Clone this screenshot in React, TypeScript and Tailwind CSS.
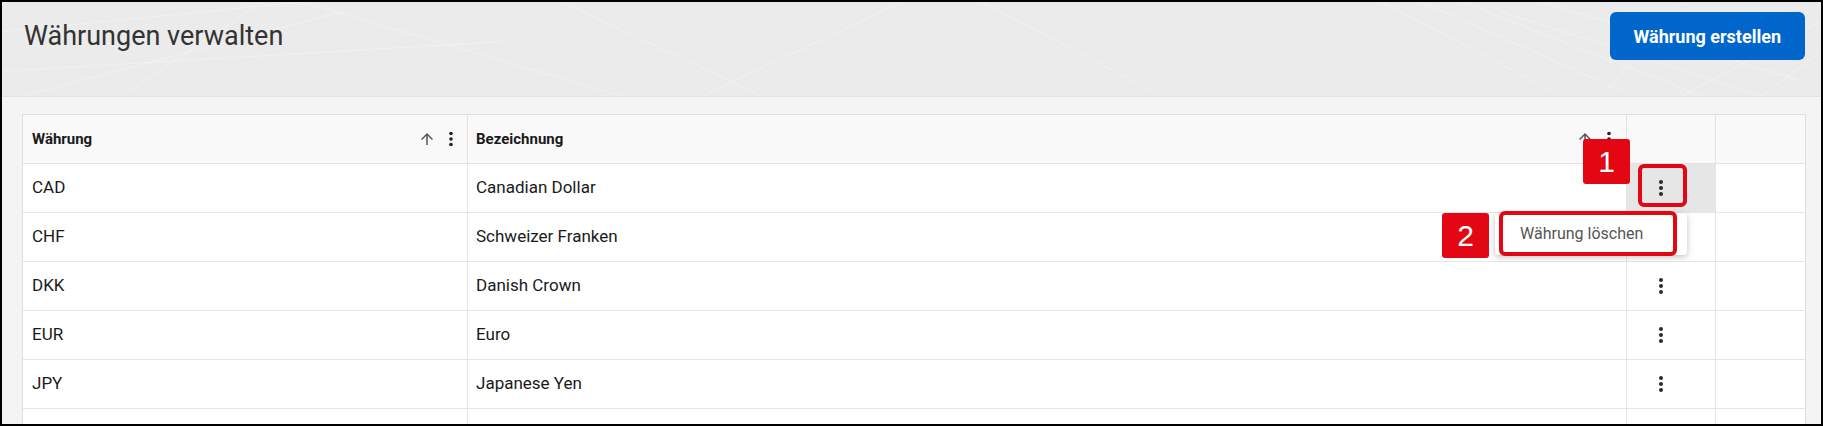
import React from "react";

const Kebab = ({ className = "" }: { className?: string }) => (
  <svg viewBox="0 0 24 24" className={className} fill="currentColor">
    <circle cx="12" cy="6" r="2" />
    <circle cx="12" cy="12" r="2" />
    <circle cx="12" cy="18" r="2" />
  </svg>
);

const ArrowUp = ({ className = "" }: { className?: string }) => (
  <svg viewBox="0 0 24 24" className={className} fill="currentColor">
    <path d="M4 12l1.41 1.41L11 7.83V20h2V7.83l5.58 5.59L20 12l-8-8-8 8z" />
  </svg>
);

const rows = [
  { code: "CAD", name: "Canadian Dollar" },
  { code: "CHF", name: "Schweizer Franken" },
  { code: "DKK", name: "Danish Crown" },
  { code: "EUR", name: "Euro" },
  { code: "JPY", name: "Japanese Yen" },
  { code: "", name: "" },
];

export default function App() {
  return (
    <div
      className="relative w-[1823px] h-[426px] overflow-hidden border-2 border-black bg-[#f4f4f4] flex flex-col"
      style={{ fontFamily: "Roboto, 'Liberation Sans', sans-serif" }}
    >
      {/* Header */}
      <div className="relative h-[95px] shrink-0 bg-[#ebebeb] border-b border-[#e2e2e2] flex justify-between items-start pl-[22px] pr-[16px] pt-[10px]">
        <svg
          className="absolute inset-0 w-full h-full pointer-events-none"
          viewBox="0 0 1819 95"
          preserveAspectRatio="none"
        >
          <g stroke="#ffffff" strokeOpacity="0.35" strokeWidth="1" fill="none">
            <path d="M0 30 L300 0" />
            <path d="M20 95 L340 10" />
            <path d="M120 95 L260 0" />
            <path d="M0 70 L500 40" />
            <path d="M300 0 L620 95" />
            <path d="M560 0 L760 95" />
            <path d="M700 95 L900 0" />
            <path d="M980 0 L1160 95" />
            <path d="M1380 0 L1560 95" />
            <path d="M1420 0 L1620 90" />
            <path d="M1460 0 L1700 95" />
            <path d="M1500 10 L1760 95" />
            <path d="M1540 0 L1800 80" />
            <path d="M1680 95 L1819 20" />
            <path d="M1600 95 L1680 0" />
            <path d="M1760 95 L1819 50" />
          </g>
        </svg>
        <h1 className="relative text-[27px] leading-[48px] font-normal text-[#333333]">
          Währungen verwalten
        </h1>
        <button className="relative h-[48px] px-[24px] rounded-[6px] bg-[#0066cc] text-white text-[18px] font-bold">
          Währung erstellen
        </button>
      </div>

      {/* Content */}
      <div className="flex-1 pt-[17px] pl-[20px] pr-[15px]">
        <div className="bg-white border border-[#dedede]">
          {/* Table header */}
          <div className="grid grid-cols-[445px_1159px_89px_1fr] h-[49px] bg-[#f9f9f9] border-b border-[#e3e3e3]">
            <div className="flex items-center justify-between pl-[9px] pr-[5px] border-r border-[#e3e3e3]">
              <span className="text-[15px] font-bold text-[#1a1a1a]">Währung</span>
              <div className="flex items-center gap-[4px]">
                <ArrowUp className="w-[18px] h-[18px] text-[#555]" />
                <Kebab className="w-[22px] h-[22px] text-[#222]" />
              </div>
            </div>
            <div className="flex items-center justify-between pl-[8px] pr-[6px] border-r border-[#e3e3e3]">
              <span className="text-[15px] font-bold text-[#1a1a1a]">Bezeichnung</span>
              <div className="flex items-center gap-[4px]">
                <ArrowUp className="w-[18px] h-[18px] text-[#555]" />
                <Kebab className="w-[22px] h-[22px] text-[#222]" />
              </div>
            </div>
            <div className="border-r border-[#e3e3e3]" />
            <div />
          </div>
          {rows.map((r, i) => (
            <div
              key={i}
              className="grid grid-cols-[445px_1159px_89px_1fr] h-[49px] border-b border-[#e6e6e6]"
            >
              <div className="flex items-center pl-[9px] border-r border-[#e6e6e6] text-[17px] text-[#1a1a1a]">
                {r.code}
              </div>
              <div className="flex items-center pl-[8px] border-r border-[#e6e6e6] text-[17px] text-[#1a1a1a]">
                {r.name}
              </div>
              <div
                className={
                  i === 0
                    ? "flex items-center pl-[22px] border-r border-[#e6e6e6] bg-[#e6e6e6]"
                    : "flex items-center pl-[22px] border-r border-[#e6e6e6]"
                }
              >
                {r.code !== "" && <Kebab className="w-[24px] h-[24px] text-[#2b2b2b]" />}
              </div>
              <div />
            </div>
          ))}
        </div>
      </div>

      {/* Popup menu */}
      <div className="absolute left-[1493px] top-[211px] w-[192px] h-[42px] bg-white rounded-[4px] shadow-[0_2px_6px_rgba(0,0,0,0.25)] flex items-center pl-[25px] text-[16px] text-[#555]">
        Währung löschen
      </div>

      {/* Annotation markers */}
      <div className="absolute left-[1636px] top-[162px] w-[49px] h-[43px] border-[4px] border-[#e30613] rounded-[6px]" />
      <div className="absolute left-[1497px] top-[209px] w-[178px] h-[45px] border-[4px] border-[#e30613] rounded-[6px]" />
      <div
        className="absolute left-[1581px] top-[137px] w-[47px] h-[45px] bg-[#e30613] rounded-[3px] flex items-center justify-center text-white text-[30px] leading-none"
        style={{ fontFamily: "'Liberation Sans', Arial, sans-serif" }}
      >
        1
      </div>
      <div
        className="absolute left-[1440px] top-[211px] w-[47px] h-[45px] bg-[#e30613] rounded-[3px] flex items-center justify-center text-white text-[30px] leading-none"
        style={{ fontFamily: "'Liberation Sans', Arial, sans-serif" }}
      >
        2
      </div>
    </div>
  );
}
